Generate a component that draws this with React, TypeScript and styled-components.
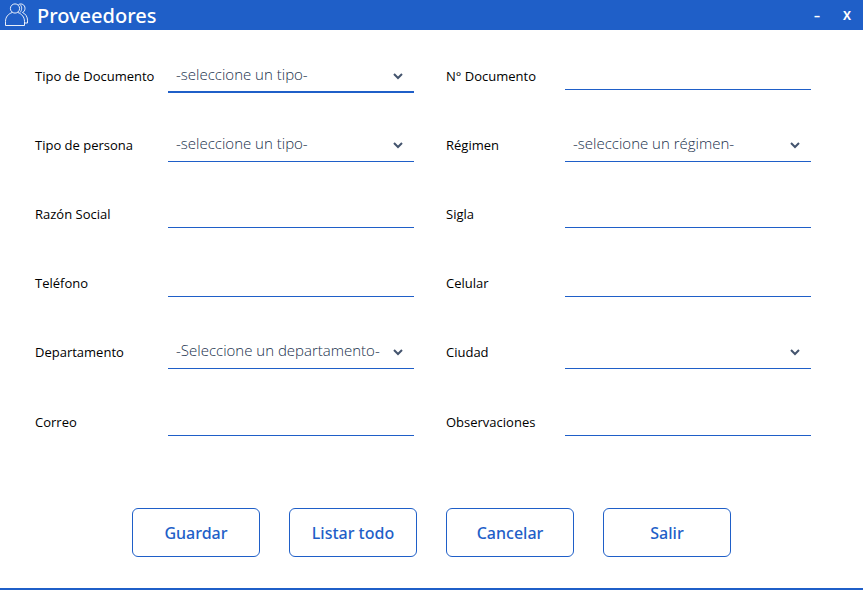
import React from "react";
import styled, { createGlobalStyle } from "styled-components";

const blue = "#1f5fc8";

const GlobalStyle = createGlobalStyle`
  * { box-sizing: border-box; }
  body {
    margin: 0;
    background: #fff;
    font-family: "Open Sans", "Noto Sans", sans-serif;
  }
  button, input, select { font-family: inherit; }
`;

const Window = styled.main`
  display: flex;
  flex-direction: column;
  min-height: 100vh;
  border-bottom: 2px solid ${blue};
`;

const TitleBar = styled.header`
  display: flex;
  align-items: center;
  height: 30px;
  padding: 0 5px 0 4px;
  background: ${blue};
  color: #fff;
`;

const Title = styled.h1`
  flex: 1;
  margin: 0;
  padding: 2px 0 0 8px;
  font-family: "Noto Sans", sans-serif;
  font-size: 20px;
  line-height: 28px;
  font-weight: 500;
`;

const WindowButton = styled.button`
  width: 22px;
  height: 30px;
  margin-left: 8px;
  padding: 2px 0 0;
  border: 0;
  background: transparent;
  color: #fff;
  font-size: 12px;
  line-height: 28px;
  font-weight: 700;
`;

const Form = styled.form`
  display: flex;
  flex: 1;
  flex-direction: column;
`;

const Fields = styled.div`
  display: grid;
  grid-template-columns: 133px minmax(0, 1fr) 151px minmax(0, 1fr);
  grid-template-rows: repeat(5, 34px) 36px;
  row-gap: 35px;
  align-items: center;
  padding: 29px 52px 0 35px;
`;

const Label = styled.label<{ $second?: boolean }>`
  padding-left: ${(p) => (p.$second ? 32 : 0)}px;
  color: #000;
  font-size: 13px;
  line-height: 20px;
  font-weight: 400;
  white-space: nowrap;
`;

const TextInput = styled.input`
  width: 100%;
  height: 28px;
  padding: 0 8px;
  border: 0;
  border-bottom: 1px solid ${blue};
  outline: 0;
  background: transparent;
  font-size: 15px;
`;

const SelectBox = styled.div`
  display: grid;
  align-items: center;
  grid-template-columns: minmax(0, 1fr) 21px;

  svg {
    grid-area: 1 / 2;
    pointer-events: none;
  }
`;

const Select = styled.select<{ $active?: boolean }>`
  grid-area: 1 / 1 / 2 / 3;
  width: 100%;
  height: 34px;
  padding: 0 24px ${(p) => (p.$active ? 2 : 3)}px 8px;
  border: 0;
  border-bottom: ${(p) => (p.$active ? 2 : 1)}px solid ${blue};
  border-radius: 0;
  outline: 0;
  appearance: none;
  background: transparent;
  color: #20304c;
  font-size: 15px;
  font-weight: 300;
`;

const Actions = styled.div`
  display: flex;
  justify-content: center;
  gap: 29px;
  padding: 68px 0 31px;
`;

const ActionButton = styled.button`
  width: 128px;
  height: 49px;
  padding: 0;
  border: 1px solid ${blue};
  border-radius: 6px;
  background: #fff;
  color: ${blue};
  font-family: "Noto Sans", sans-serif;
  font-size: 16px;
  font-weight: 500;
`;

function UsersIcon() {
  return (
    <svg width="25" height="28" viewBox="0 0 25 28" fill="none" stroke="#fff" strokeWidth="0.9" aria-hidden="true">
      <circle cx="11" cy="7.500" r="4.600" />
      <path d="M8.200 11.500c-3.900 1.300-6.700 4.500-6.700 9v4h19v-4c0-4.500-2.800-7.700-6.700-9" />
      <path d="M14.500 3.500c3-1.500 6.500.2 6.500 3.800 0 2-1 3.500-2.500 4.200 3.200 1.300 5 4.500 5 7.700v2.800h-3" />
      <path d="M16 3.500c2.200 2 2.200 5.500 0 8" />
    </svg>
  );
}

function Chevron() {
  return (
    <svg width="10" height="8" viewBox="0 0 10 8" fill="none" stroke="#44546e" strokeWidth="2" aria-hidden="true">
      <path d="M1 2l4 4 4-4" />
    </svg>
  );
}

type FieldDef = { id: string; label: string; option?: string; active?: boolean };

const fields: FieldDef[] = [
  { id: "tipoDocumento", label: "Tipo de Documento", option: "-seleccione un tipo-", active: true },
  { id: "numeroDocumento", label: "N° Documento" },
  { id: "tipoPersona", label: "Tipo de persona", option: "-seleccione un tipo-" },
  { id: "regimen", label: "Régimen", option: "-seleccione un régimen-" },
  { id: "razonSocial", label: "Razón Social" },
  { id: "sigla", label: "Sigla" },
  { id: "telefono", label: "Teléfono" },
  { id: "celular", label: "Celular" },
  { id: "departamento", label: "Departamento", option: "-Seleccione un departamento-" },
  { id: "ciudad", label: "Ciudad", option: "" },
  { id: "correo", label: "Correo" },
  { id: "observaciones", label: "Observaciones" },
];

const actions = ["Guardar", "Listar todo", "Cancelar", "Salir"];

export default function App() {
  return (
    <Window>
      <GlobalStyle />
      <TitleBar>
        <UsersIcon />
        <Title>Proveedores</Title>
        <WindowButton type="button" aria-label="Minimizar">–</WindowButton>
        <WindowButton type="button" aria-label="Cerrar">X</WindowButton>
      </TitleBar>
      <Form onSubmit={(e) => e.preventDefault()}>
        <Fields>
          {fields.map((field, i) => (
            <React.Fragment key={field.id}>
              <Label htmlFor={field.id} $second={i % 2 === 1}>{field.label}</Label>
              {field.option === undefined ? (
                <TextInput id={field.id} type="text" />
              ) : (
                <SelectBox>
                  <Select id={field.id} $active={field.active}>
                    <option>{field.option}</option>
                  </Select>
                  <Chevron />
                </SelectBox>
              )}
            </React.Fragment>
          ))}
        </Fields>
        <Actions>
          {actions.map((name) => (
            <ActionButton key={name} type="button">{name}</ActionButton>
          ))}
        </Actions>
      </Form>
    </Window>
  );
}
